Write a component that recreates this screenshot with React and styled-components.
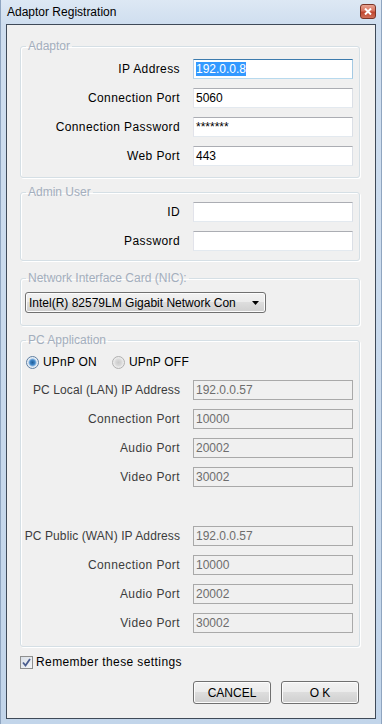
import React from 'react';
import styled, { createGlobalStyle } from 'styled-components';

const GlobalStyle = createGlobalStyle`
  html, body { margin: 0; padding: 0; }
  body {
    font-family: "Liberation Sans", Arial, sans-serif;
    font-size: 12px;
    color: #000;
  }
`;

const Window = styled.div`
  width: 382px;
  height: 724px;
  box-sizing: border-box;
  display: flex;
  flex-direction: column;
  background: linear-gradient(180deg, #dde8f4 0px, #cfdeef 24px, #c2d5ea 100%);
  border-left: 1px solid #8fa5c0;
  border-right: 1px solid #8fa5c0;
`;

const TitleBar = styled.div`
  height: 24px;
  flex: none;
  display: flex;
  justify-content: space-between;
  align-items: center;
  padding: 0 5px 0 6px;
`;

const Title = styled.span`
  font-size: 12px;
  color: #000;
`;

const CloseButton = styled.div`
  width: 16px;
  height: 15px;
  align-self: flex-start;
  margin-top: 4px;
  box-sizing: border-box;
  border: 1px solid #7a3528;
  border-radius: 3px;
  background: linear-gradient(180deg, #e8a493 0%, #d8735f 45%, #c0452e 55%, #d0705a 100%);
  display: flex;
  align-items: center;
  justify-content: center;
`;

const Client = styled.div`
  flex: 1;
  margin: 0 5px 6px 5px;
  border: 1px solid #3f4a58;
  background: #f0f0f0;
  padding: 14px 15px 14px 13px;
  display: flex;
  flex-direction: column;
`;

const GroupBox = styled.fieldset`
  margin: ${(p) => p.$mt || 0}px 0 0 0;
  padding: ${(p) => p.$pt}px 6px ${(p) => p.$pb}px 5px;
  border: 1px solid #d5dfe5;
  border-radius: 3px;
  box-shadow: inset 1px 1px 0 #fff, 1px 1px 0 #fff;
  min-width: 0;
  display: flex;
  flex-direction: column;
  gap: 9px;
`;

const Legend = styled.legend`
  padding: 0 2px;
  font-size: 12px;
  line-height: 14px;
  color: #a3aebd;
`;

const Row = styled.div`
  display: grid;
  grid-template-columns: minmax(0, 1fr) 160px;
  column-gap: 13px;
  align-items: center;
  height: 20px;
`;

const Label = styled.span`
  display: flex;
  justify-content: flex-end;
  min-width: 0;
  white-space: nowrap;
  letter-spacing: ${(p) => (p.$tight ? '0.1px' : '0.4px')};
  color: ${(p) => (p.$disabled ? '#3c3c3c' : '#000')};
`;

const Field = styled.div`
  height: 20px;
  box-sizing: border-box;
  border: 1px solid;
  border-color: ${(p) =>
    p.$focused
      ? '#3d7bad #a4c9e3 #b7d9ed #b5cfe7'
      : p.$disabled
      ? '#a9a9a9'
      : '#abadb3 #dbdfe6 #e3e9ef #e2e3ea'};
  background: ${(p) => (p.$disabled ? '#f0f0f0' : '#fff')};
  color: ${(p) => (p.$disabled ? '#6d6d6d' : '#000')};
  padding: 0 2px;
  line-height: 18px;
  white-space: nowrap;
  overflow: hidden;
`;

const Selected = styled.span`
  background: #3399ff;
  color: #fff;
`;

const Spacer = styled.div`
  height: 21px;
`;

const Select = styled.div`
  width: 241px;
  height: 21px;
  margin-left: -1px;
  box-sizing: border-box;
  border: 1px solid #707070;
  border-radius: 3px;
  background: linear-gradient(180deg, #f2f2f2 0%, #ebebeb 49%, #dddddd 50%, #cfcfcf 100%);
  box-shadow: inset 0 0 0 1px #fcfcfc;
  display: flex;
  align-items: center;
  justify-content: space-between;
  padding: 0 6px 0 3px;
  white-space: nowrap;
`;

const RadioRow = styled.div`
  display: flex;
  align-items: center;
  height: 16px;
  margin-bottom: 1px;
`;

const RadioItem = styled.label`
  display: flex;
  align-items: center;
  gap: 4px;
  margin-right: 15px;
  letter-spacing: 0.2px;
  color: #000;
`;

const RadioCircle = styled.span`
  width: 13px;
  height: 13px;
  box-sizing: border-box;
  border-radius: 50%;
  border: 1px solid ${(p) => (p.$checked ? '#5f7fa2' : '#b0b0b0')};
  background: ${(p) =>
    p.$checked
      ? 'radial-gradient(circle at 50% 50%, #1f5e99 0, #3f86c8 2.5px, #8ab6e0 3.5px, #e4ecf4 4.5px, #f5f7f9 100%)'
      : 'radial-gradient(circle at 50% 50%, #c9c9c9 0, #dcdcdc 3.5px, #e8e8e8 4.5px, #f4f4f4 100%)'};
`;

const CheckRow = styled.label`
  display: flex;
  align-items: center;
  gap: 3px;
  height: 14px;
  margin-top: 8px;
  letter-spacing: 0.4px;
`;

const CheckBox = styled.span`
  width: 13px;
  height: 13px;
  box-sizing: border-box;
  border: 1px solid #8e8f8f;
  background: linear-gradient(135deg, #d9dfe7 0%, #f4f6f8 100%);
  display: flex;
  align-items: center;
  justify-content: center;
`;

const ButtonBar = styled.div`
  display: flex;
  justify-content: flex-end;
  gap: 10px;
  margin-top: 12px;
  padding-right: 1px;
`;

const Button = styled.button`
  width: 78px;
  height: 23px;
  box-sizing: border-box;
  border: 1px solid #707070;
  border-radius: 3px;
  background: linear-gradient(180deg, #f2f2f2 0%, #ebebeb 49%, #dddddd 50%, #cfcfcf 100%);
  box-shadow: inset 0 0 0 1px #fcfcfc;
  font-family: "Liberation Sans", Arial, sans-serif;
  font-size: 12px;
  color: #000;
  padding: 0;
`;

const adaptorRows = [
  { label: 'IP Address', value: '192.0.0.8', selected: true },
  { label: 'Connection Port', value: '5060' },
  { label: 'Connection Password', value: '*******' },
  { label: 'Web Port', value: '443' },
];

const lanRows = [
  { label: 'PC Local (LAN) IP Address', value: '192.0.0.57', tight: true },
  { label: 'Connection Port', value: '10000' },
  { label: 'Audio Port', value: '20002' },
  { label: 'Video Port', value: '30002' },
];

const wanRows = [
  { label: 'PC Public (WAN) IP Address', value: '192.0.0.57', tight: true },
  { label: 'Connection Port', value: '10000' },
  { label: 'Audio Port', value: '20002' },
  { label: 'Video Port', value: '30002' },
];

function FieldRow({ label, value, selected, disabled, tight }) {
  return (
    <Row>
      <Label $disabled={disabled} $tight={tight}>{label}</Label>
      <Field $focused={selected} $disabled={disabled}>
        {selected ? <Selected>{value}</Selected> : value}
      </Field>
    </Row>
  );
}

export default function App() {
  return (
    <>
      <GlobalStyle />
      <Window>
        <TitleBar>
          <Title>Adaptor Registration</Title>
          <CloseButton>
            <svg width="8" height="7" viewBox="0 0 8 7">
              <path d="M1 0.5 L7 6.5 M7 0.5 L1 6.5" stroke="#fff" strokeWidth="2" />
            </svg>
          </CloseButton>
        </TitleBar>
        <Client>
          <GroupBox $pt={6} $pb={11}>
            <Legend>Adaptor</Legend>
            {adaptorRows.map((r) => (
              <FieldRow key={r.label} {...r} />
            ))}
          </GroupBox>

          <GroupBox $mt={7} $pt={3} $pb={9}>
            <Legend>Admin User</Legend>
            <FieldRow label="ID" value="" />
            <FieldRow label="Password" value="" />
          </GroupBox>

          <GroupBox $mt={10} $pt={7} $pb={12}>
            <Legend>Network Interface Card (NIC):</Legend>
            <Select>
              <span>Intel(R) 82579LM Gigabit Network Con</span>
              <svg width="7" height="4" viewBox="0 0 7 4">
                <path d="M0 0 H7 L3.5 4 Z" fill="#000" />
              </svg>
            </Select>
          </GroupBox>

          <GroupBox $mt={7} $pt={7} $pb={13}>
            <Legend>PC Application</Legend>
            <RadioRow>
              <RadioItem>
                <RadioCircle $checked />
                UPnP ON
              </RadioItem>
              <RadioItem>
                <RadioCircle />
                UPnP OFF
              </RadioItem>
            </RadioRow>
            {lanRows.map((r) => (
              <FieldRow key={'lan' + r.label} {...r} disabled />
            ))}
            <Spacer />
            {wanRows.map((r) => (
              <FieldRow key={'wan' + r.label} {...r} disabled />
            ))}
          </GroupBox>

          <CheckRow>
            <CheckBox>
              <svg width="9" height="9" viewBox="0 0 9 9">
                <path d="M1 4.5 L3.5 7.5 L8 1" stroke="#4a5d8f" strokeWidth="1.8" fill="none" />
              </svg>
            </CheckBox>
            Remember these settings
          </CheckRow>

          <ButtonBar>
            <Button>CANCEL</Button>
            <Button>O K</Button>
          </ButtonBar>
        </Client>
      </Window>
    </>
  );
}
